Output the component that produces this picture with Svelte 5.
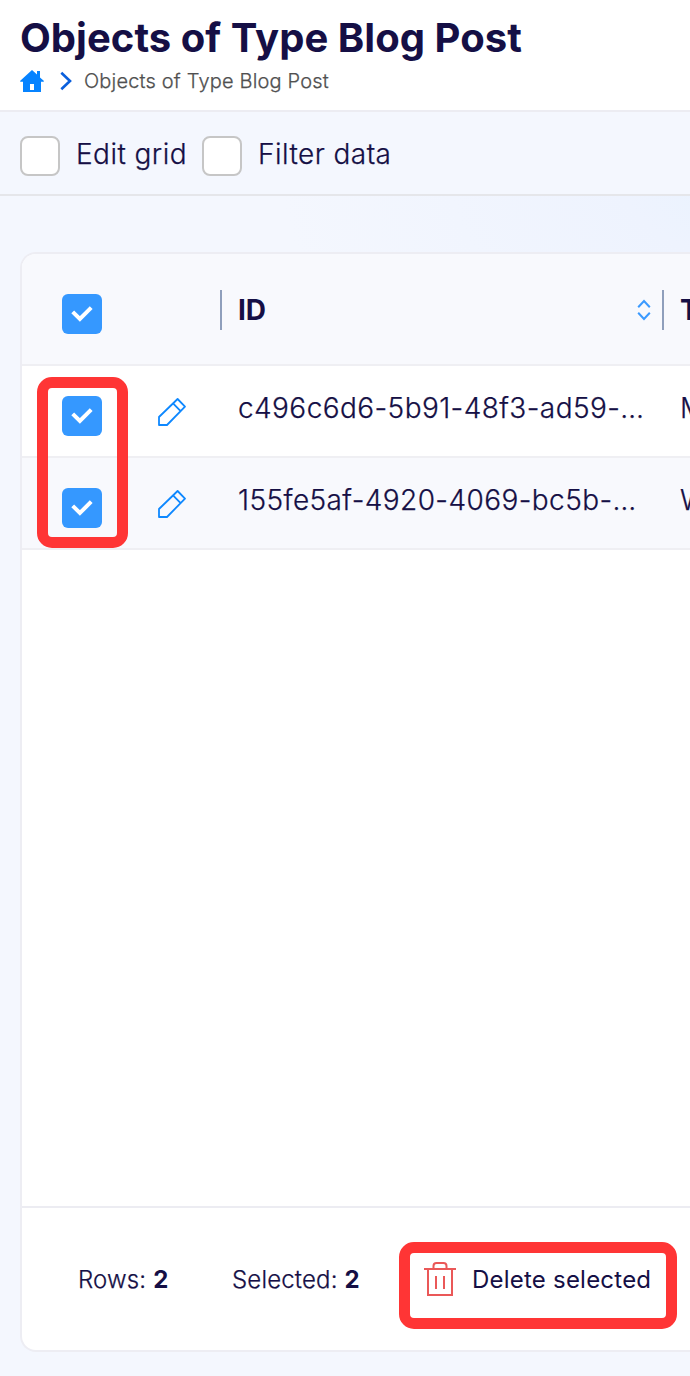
<script>
  const rows = [
    { id: 'c496c6d6-5b91-48f3-ad59-…', next: 'M' },
    { id: '155fe5af-4920-4069-bc5b-…', next: 'W' }
  ];
</script>

{#snippet checked()}
  <span class="check">
    <svg width="40" height="40" viewBox="0 0 40 40" fill="none">
      <path d="M10.7 17.8 L17.9 25 L29.2 13.7" stroke="#fff" stroke-width="4" />
    </svg>
  </span>
{/snippet}

<div class="page">
  <header class="top">
    <h1>Objects of Type Blog Post</h1>
    <nav class="crumbs">
      <svg class="home" width="24" height="24" viewBox="0 0 24 24">
        <path fill="#0683ff" fill-rule="evenodd" d="M12 1 L17 5.6 V2 H20 V8.4 L24 12 L23.6 12.7 H21 V23 H3 V12.7 H.4 L0 12 Z M10 15 V21 H14 V15 Z" />
      </svg>
      <svg class="chev" width="12" height="20" viewBox="0 0 12 20" fill="none">
        <path d="M1.3 1.8 L10 10 L1.3 18.2" stroke="#0a5fdc" stroke-width="2.6" />
      </svg>
      <span>Objects of Type Blog Post</span>
    </nav>
  </header>

  <div class="toolbar">
    <label><span class="box"></span><span class="edit">Edit grid</span></label>
    <label><span class="box"></span><span>Filter data</span></label>
  </div>

  <main>
    <section class="card">
      <div class="row head">
        <div class="sel">{@render checked()}</div>
        <div class="id"><span class="bar"></span><b>ID</b>
          <svg class="sort" width="14" height="22" viewBox="0 0 14 22" fill="none">
            <path d="M1.2 8.3 L7 2 L12.8 8.3 M1.2 13.7 L7 20 L12.8 13.7" stroke="#3b9aff" stroke-width="2" />
          </svg>
        </div>
        <div class="next"><span class="bar"></span><b>T</b></div>
      </div>
      {#each rows as row, i}
        <div class="row item" class:alt={i % 2 === 1}>
          <div class="sel">
            {@render checked()}
            <svg class="pencil" width="30" height="30" viewBox="0 0 30 30" fill="none" stroke="#0e88ff" stroke-width="1.8" stroke-linejoin="round">
              <path d="M20.6 2 L28 9.6 L10 28 H2 V20 Z M15.8 6.2 L23.4 13.8" />
            </svg>
          </div>
          <div class="id">{row.id}</div>
          <div class="next">{row.next}</div>
        </div>
      {/each}
      <div class="blank"></div>
      <footer>
        <span class="rows">Rows: <b>2</b></span>
        <span class="picked">Selected: <b>2</b></span>
        <button>
          <svg width="32" height="36" viewBox="0 0 32 36" fill="none" stroke="#ea5858" stroke-width="2">
            <path d="M0 8 H32 M4 8 V34 H28 V8 M9.5 8 V5 Q9.5 2 12.5 2 H19.5 Q22.5 2 22.5 5 V8 M12 15 V28 M20 15 V28" />
          </svg>
          <span>Delete selected</span>
        </button>
      </footer>
    </section>
  </main>

  <div class="mark mark-rows"></div>
  <div class="mark mark-delete"></div>
</div>

<style>
  :global(body) { margin: 0; }
  * { box-sizing: border-box; }
  .page {
    position: relative;
    width: 690px;
    height: 1376px;
    overflow: hidden;
    display: flex;
    flex-direction: column;
    background: #f4f7fe;
    color: #150f45;
    font: 300 28px/40px Inter, sans-serif;
    white-space: nowrap;
  }
  .crumbs span, label, .item, .rows, .picked { -webkit-text-stroke: 0.25px currentColor; }
  .top {
    height: 112px;
    flex: none;
    padding: 14px 20px 0;
    background: #fff;
    border-bottom: 2px solid #ececf2;
  }
  h1 { margin: 0; font-size: 40px; line-height: 48px; font-weight: 700; letter-spacing: 0.04px; }
  .crumbs {
    display: flex;
    align-items: center;
    height: 24px;
    margin-top: 7px;
    font-size: 20px;
    line-height: 24px;
    color: #505050;
    letter-spacing: 0.18px;
  }
  .chev { margin: 0 12px 0 16px; }
  .toolbar {
    height: 84px;
    flex: none;
    display: flex;
    gap: 16px;
    padding: 22px 20px 0;
    border-bottom: 2px solid #e5e6ea;
    letter-spacing: 0.45px;
  }
  label { display: flex; gap: 16px; }
  .edit { width: 110px; }
  .box {
    width: 40px;
    height: 40px;
    margin-top: 2px;
    border: 2px solid #c6c6c6;
    border-radius: 8px;
    background: #fff;
  }
  main {
    flex: 1;
    display: flex;
    padding: 56px 0 24px 20px;
    background: radial-gradient(ellipse 480px 320px at 760px -30px, #e8f2fe, #eef3fe 30%, #f4f7fe);
  }
  .card {
    flex: 1;
    display: flex;
    flex-direction: column;
    border: 2px solid #ededf3;
    border-right: 0;
    border-radius: 16px 0 0 16px;
    background: #fff;
    overflow: hidden;
  }
  .row {
    display: grid;
    grid-template-columns: 198px 442px 1fr;
    flex: none;
    border-bottom: 2px solid #efeff3;
  }
  .head { height: 112px; padding-top: 36px; background: #f8f9fd; }
  .head b { font-weight: 700; }
  .head .id, .head .next { display: flex; }
  .head .sel { padding-top: 4px; }
  .bar { width: 2px; height: 40px; margin-right: 16px; background: #8f9fbc; }
  .sort { margin: 9px 11px 0 auto; }
  .item { height: 92px; padding-top: 22px; letter-spacing: 0.42px; }
  .item .id, .item .next { padding-left: 18px; }
  .item .sel { padding-top: 8px; }
  .alt { background: #f8f9fd; }
  .sel { display: flex; padding-left: 40px; }
  .check { width: 40px; height: 40px; border-radius: 6px; background: #3598ff; }
  .check svg { display: block; }
  .pencil { margin: 1px 0 0 55px; }
  .blank { flex: 1; }
  footer {
    height: 144px;
    flex: none;
    display: flex;
    padding: 52px 0 0 56px;
    border-top: 2px solid #ececf2;
    font-size: 24px;
    letter-spacing: 0.17px;
  }
  footer b { font-weight: 700; -webkit-text-stroke: 0; }
  .rows { width: 154px; }
  .picked { width: 192px; }
  button {
    display: flex;
    gap: 16px;
    height: 40px;
    padding: 0;
    border: 0;
    background: none;
    color: inherit;
    font: 400 24px/40px Inter, sans-serif;
    letter-spacing: 0.22px;
  }
  button svg { margin-top: 1px; }
  .mark { position: absolute; border: 11px solid #ff3535; border-radius: 15px; }
  .mark-rows { left: 37px; top: 377px; width: 91px; height: 171px; }
  .mark-delete { left: 399px; top: 1242px; width: 278px; height: 87px; }
</style>
